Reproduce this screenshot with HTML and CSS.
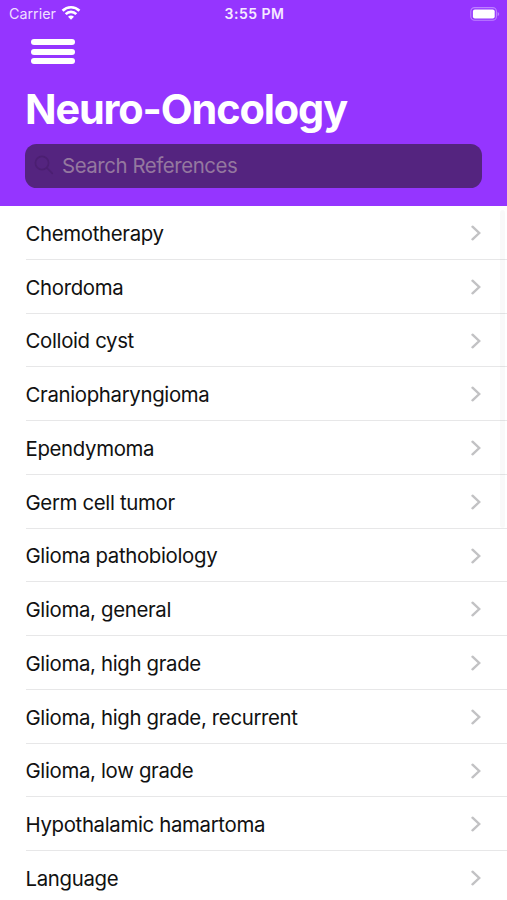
FILE: index.html
```
<!DOCTYPE html>
<html lang="en">
<head>
<meta charset="utf-8">
<meta name="viewport" content="width=device-width">
<title>Neuro-Oncology</title>
<link rel="stylesheet" href="styles.css">
</head>
<body>
<svg width="0" height="0" class="defs"><symbol id="chev" viewBox="0 0 10 16"><path d="M1.5 1.7 8.2 8 1.5 14.3" fill="none" stroke="#c2c2c4" stroke-width="2.4" stroke-linecap="round" stroke-linejoin="miter"/></symbol></svg>
<div class="screen">
<header class="header">
  <div class="status">
    <div class="carrier"><span>Carrier</span>
      <svg class="wifi" width="20" height="15" viewBox="0 0 20 15"><g fill="none" stroke="#fff" stroke-width="2.7"><path d="M1.6 5.7A12 12 0 0 1 18.4 5.7"/><path d="M4.7 9.1A7.6 7.6 0 0 1 15.3 9.1"/></g><path d="M7 11.8Q10 9.4 13 11.8L10 14.8Z" fill="#fff"/></svg>
    </div>
    <span class="time">3:55 PM</span>
    <svg class="battery" width="30" height="14" viewBox="0 0 30 14"><rect x=".8" y=".6" width="25.6" height="12.6" rx="3.8" fill="none" stroke="#bd82ff" stroke-width="1.1"/><rect x="2.9" y="2.4" width="21.8" height="9.2" rx="2" fill="#fff"/><path d="M27.6 4.7Q30.8 7 27.6 9.3Z" fill="#bd82ff"/></svg>
  </div>
  <div class="menu"><i></i><i></i><i></i></div>
  <h1>Neuro-Oncology</h1>
  <div class="search">
    <svg width="20" height="20" viewBox="0 0 20 20" fill="none" stroke="#4b1f71" stroke-width="1.7" stroke-linecap="round"><circle cx="8" cy="8" r="6.6"/><path d="m13 13 5.3 5.3"/></svg>
    <span>Search References</span>
  </div>
</header>
<main class="list">
  <div class="row"><span>Chemotherapy</span><svg><use href="#chev"/></svg></div>
  <div class="row"><span>Chordoma</span><svg><use href="#chev"/></svg></div>
  <div class="row"><span>Colloid cyst</span><svg><use href="#chev"/></svg></div>
  <div class="row"><span>Craniopharyngioma</span><svg><use href="#chev"/></svg></div>
  <div class="row"><span>Ependymoma</span><svg><use href="#chev"/></svg></div>
  <div class="row"><span>Germ cell tumor</span><svg><use href="#chev"/></svg></div>
  <div class="row"><span>Glioma pathobiology</span><svg><use href="#chev"/></svg></div>
  <div class="row"><span>Glioma, general</span><svg><use href="#chev"/></svg></div>
  <div class="row"><span>Glioma, high grade</span><svg><use href="#chev"/></svg></div>
  <div class="row"><span>Glioma, high grade, recurrent</span><svg><use href="#chev"/></svg></div>
  <div class="row"><span>Glioma, low grade</span><svg><use href="#chev"/></svg></div>
  <div class="row"><span>Hypothalamic hamartoma</span><svg><use href="#chev"/></svg></div>
  <div class="row"><span>Language</span><svg><use href="#chev"/></svg></div>
  <div class="scrollbar"></div>
</main>
</div>
</body>
</html>
```
FILE: styles.css
```
* { box-sizing: border-box; }
body { margin: 0; background: #fff; font-family: Inter, "Liberation Sans", sans-serif; }
.defs { position: absolute; }
.screen { width: 507px; height: 900px; overflow: hidden; }
.header { height: 206px; background: #9535ff; color: #fff; display: flex; flex-direction: column; }
.status { height: 27px; display: grid; grid-template-columns: 1fr auto 1fr; align-items: center; padding: 0 7px 0 9px; }
.carrier { display: flex; align-items: center; gap: 5px; font-size: 14.3px; color: #efdfff; }
.wifi { margin-top: -2px; }
.time { font-size: 14px; font-weight: 600; color: #f5eaff; letter-spacing: .5px; }
.battery { justify-self: end; }
.menu { margin: 12px 0 0 31px; width: 44px; display: flex; flex-direction: column; gap: 3.6px; }
.menu i { height: 6px; border-radius: 3px; background: #fff; }
h1 { margin: 20px 0 0 25px; font-size: 41.4px; line-height: 50px; height: 50px; font-weight: 700; letter-spacing: -1.12px; white-space: nowrap; }
.search { margin: 10px 25px 0; height: 44px; border-radius: 11.5px; background: #54247f; display: flex; align-items: center; gap: 8px; padding: 0 0 2px 9px; color: #94789f; font-size: 20.4px; letter-spacing: -.42px; }
.list { position: relative; }
.row { height: 53.75px; margin-left: 25.5px; padding-right: 26px; border-bottom: 1px solid #e7e7e8; display: flex; align-items: center; justify-content: space-between; font-size: 20.4px; letter-spacing: -.34px; color: #111; white-space: nowrap; }
.row span { position: relative; top: 1px; }
.row svg { width: 10px; height: 16px; margin-top: 1.5px; }
.scrollbar { position: absolute; top: 4px; right: 2px; width: 5px; height: 318px; border-radius: 3px; background: rgba(0, 0, 0, .025); }
```
